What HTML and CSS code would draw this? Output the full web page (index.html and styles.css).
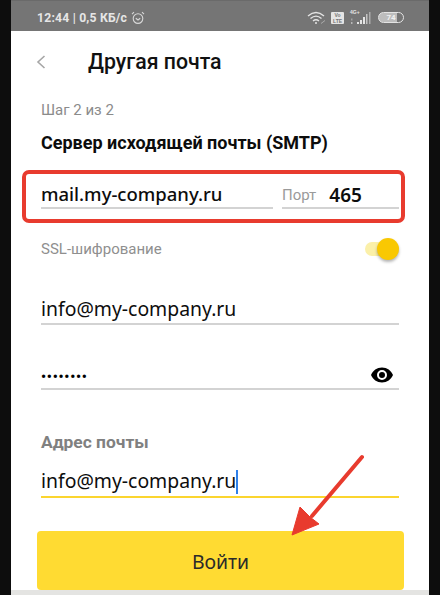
FILE: index.html
```html
<!DOCTYPE html>
<html lang="ru">
<head>
<meta charset="utf-8">
<title>Другая почта</title>
<link rel="stylesheet" href="styles.css">
</head>
<body>
<div class="phone">
  <div class="status">
    <span class="clock">12:44 | 0,5 КБ/с</span>
    <svg class="alarm" width="14" height="14" viewBox="0 0 14 14" fill="none" stroke="#d8d8d8" stroke-width="1.1"><circle cx="7" cy="7.6" r="4.8"/><path d="M4.8 7.2 7 9l2.2-1.8M1 3.2 3 1.2M13 3.2 11 1.2"/></svg>
    <span class="spacer"></span>
    <svg class="wifi" width="20" height="14" viewBox="0 0 20 14" fill="none" stroke="#e4e4e4" stroke-width="1.4"><path d="M1 5c5-4.400 11-4.400 16 0M3.500 7.500c3.500-3 7.500-3 11 0M6 10c2-1.600 4-1.600 6 0"/><circle cx="9" cy="12" r="1" fill="#e4e4e4" stroke="none"/><path d="M14 12.500l4-3" stroke="#aaa" stroke-width="1"/></svg>
    <span class="volte">Vo<br>LTE</span>
    <span class="net">
      <span class="net-label">4G+</span>
      <svg width="22" height="14" viewBox="0 0 22 14" fill="#e4e4e4"><rect x="1" y="11" width="1.500" height="2" opacity=".6"/><rect x="1" y="7.500" width="1.500" height="2" opacity=".4"/><rect x="7" y="11" width="2" height="2"/><rect x="10" y="9" width="2" height="4"/><rect x="13" y="6" width="2" height="7"/><rect x="16" y="3" width="1.500" height="10" opacity=".7"/><rect x="19" y="1" width="1.500" height="12" opacity=".5"/></svg>
    </span>
    <span class="battery">74</span>
  </div>

  <main class="content">
    <header class="titlebar">
      <svg class="back" width="10" height="14" viewBox="0 0 10 14" fill="none" stroke="#a6a6a6" stroke-width="1.600"><path d="M8.500 1 2 7l6.500 6"/></svg>
      <h1 class="title">Другая почта</h1>
    </header>

    <p class="step">Шаг 2 из 2</p>
    <h2 class="section">Сервер исходящей почты (SMTP)</h2>

    <div class="server-row">
      <div class="field host">mail.my-company.ru</div>
      <div class="field port"><span class="port-label">Порт</span><span class="port-value">465</span></div>
    </div>

    <div class="ssl-row">
      <span class="ssl-label">SSL-шифрование</span>
      <span class="switch"><span class="knob"></span></span>
    </div>

    <div class="field login">info@my-company.ru</div>

    <div class="field password">
      <span class="dots">••••••••</span>
      <svg class="eye" width="24" height="16" viewBox="0 0 24 16"><path fill="#000" fill-rule="evenodd" d="M12 0.500C7 0.500 2.800 3.600 1 8c1.800 4.400 6 7.500 11 7.500S21.200 12.400 23 8C21.200 3.600 17 0.500 12 0.500Zm0 12.500a5 5 0 1 1 0-10 5 5 0 0 1 0 10Zm0-8a3 3 0 1 0 0 6 3 3 0 0 0 0-6Z"/></svg>
    </div>

    <div class="address-label">Адрес почты</div>
    <div class="field address">info@my-company.ru<span class="caret"></span></div>

    <button class="submit" type="button">Войти</button>
  </main>
  <div class="navstrip"></div>

  <div class="highlight"></div>
  <svg class="arrow" width="85" height="90" viewBox="285 450 85 90"><path d="M362 457 312 516" stroke="#e83b2e" stroke-width="4" stroke-linecap="round" fill="none"/><path d="M292 535 300 507 310 517 319 524Z" fill="#e83b2e" stroke="#e83b2e" stroke-linejoin="round"/></svg>
</div>
</body>
</html>
```
FILE: styles.css
```css
* { box-sizing: border-box; }
html, body { margin: 0; padding: 0; }
body {
  width: 440px;
  height: 595px;
  overflow: hidden;
  background: #0d0d0d;
  font-family: "Noto Sans", "Open Sans", sans-serif;
}
.phone {
  position: relative;
  width: 418px;
  height: 595px;
  margin-left: 11px;
  background: #fff;
  overflow: hidden;
}
.status {
  display: flex;
  align-items: center;
  height: 31px;
  padding: 3px 25px 0 26px;
  background: #757575;
  border-top: 1px solid #6a6a6a;
  color: #e4e4e4;
}
.clock {
  font: 700 12.200px Roboto, sans-serif;
  letter-spacing: .2px;
  color: #e6e6e6;
}
.alarm { margin-left: 4px; }
.spacer { flex: 1; }
.wifi { margin-right: 4px; }
.volte {
  width: 13px;
  height: 12px;
  margin-right: 6px;
  background: #e4e4e4;
  color: #757575;
  border-radius: 1px;
  font: 700 5px/6px "Liberation Sans", sans-serif;
  text-align: center;
}
.net { position: relative; display: flex; width: 22px; margin-right: 6px; }
.net-label {
  position: absolute;
  left: 0;
  top: -2px;
  font: 700 5px "Liberation Sans", sans-serif;
}
.battery {
  width: 26px;
  height: 11px;
  border: 1px solid #e4e4e4;
  border-radius: 6px;
  background: linear-gradient(90deg, #bdbdbd 0 74%, transparent 74%);
  font: 700 8px/9px Roboto, sans-serif;
  text-align: center;
  color: #f0f0f0;
}
.content { padding: 0 30px; }
.titlebar {
  display: flex;
  align-items: center;
  height: 31px;
  margin-top: 15px;
}
.back { margin-left: -5px; }
.title {
  margin: 0 0 0 42px;
  font: 500 21.300px Roboto, sans-serif;
  color: #111;
}
.step {
  margin: 23px 0 0;
  font: 400 15px/20px Roboto, sans-serif;
  color: #8b8b8b;
}
.section {
  margin: 13px 0 0;
  font: 700 18px/20px Roboto, sans-serif;
  color: #0c0c0c;
}
.field {
  height: 38px;
  padding-top: 10px;
  border-bottom: 2px solid #d3d3d3;
  font-size: 19.400px;
  line-height: 26px;
  color: #0d0d0d;
}
.server-row {
  display: flex;
  gap: 9px;
  margin-top: 18px;
}
.host { width: 232px; font-size: 18.500px; font-weight: 500; }
.port {
  display: flex;
  align-items: center;
  width: 117px;
  padding-top: 12px;
}
.port-label { font: 400 15px Roboto, sans-serif; color: #9a9a9a; }
.port-value { margin-left: 13px; font-size: 19px; font-weight: 600; }
.ssl-row {
  display: flex;
  align-items: center;
  justify-content: space-between;
  height: 26px;
  margin-top: 27px;
}
.ssl-label { font: 400 15px Roboto, sans-serif; color: #8f8f8f; }
.switch {
  position: relative;
  width: 34px;
  height: 14px;
  border-radius: 7px;
  background: #fbf0a9;
}
.knob {
  position: absolute;
  top: -4px;
  right: 0;
  width: 22px;
  height: 22px;
  border-radius: 50%;
  background: #f9c802;
  box-shadow: 0 2px 3px rgba(0, 0, 0, .3);
}
.login { margin-top: 25px; padding-top: 9px; }
.password {
  display: flex;
  align-items: center;
  justify-content: space-between;
  margin-top: 27px;
  padding-top: 9px;
}
.dots {
  margin-top: 4px;
  font: 700 14px/20px Roboto, sans-serif;
  letter-spacing: .8px;
  color: #000;
}
.eye { margin-right: 5px; }
.address-label {
  margin-top: 42px;
  font: 700 17.400px/20px Roboto, sans-serif;
  color: #808080;
}
.address {
  height: 40px;
  margin-top: 6px;
  padding-top: 10px;
  border-bottom-color: #fbd52f;
}
.caret {
  display: inline-block;
  width: 2px;
  height: 24px;
  margin-left: 0;
  vertical-align: -6px;
  background: #2f80e8;
}
.submit {
  position: relative;
  z-index: 1;
  display: block;
  width: 367px;
  height: 59px;
  margin: 33px 0 0 -4px;
  padding: 2px 0 0;
  border: 0;
  border-radius: 4px;
  background: #ffdb32;
  font: 400 19.400px "Noto Sans", sans-serif;
  color: #2a2a2a;
}
.navstrip {
  position: absolute;
  left: 0;
  right: 0;
  bottom: 0;
  height: 5px;
  background: #e4e4e2;
}
.highlight {
  position: absolute;
  left: 11px;
  top: 170px;
  width: 383px;
  height: 53px;
  border: 4px solid #e83b2e;
  border-radius: 7px;
}
.arrow {
  position: absolute;
  left: 274px;
  top: 450px;
  z-index: 2;
}
```
